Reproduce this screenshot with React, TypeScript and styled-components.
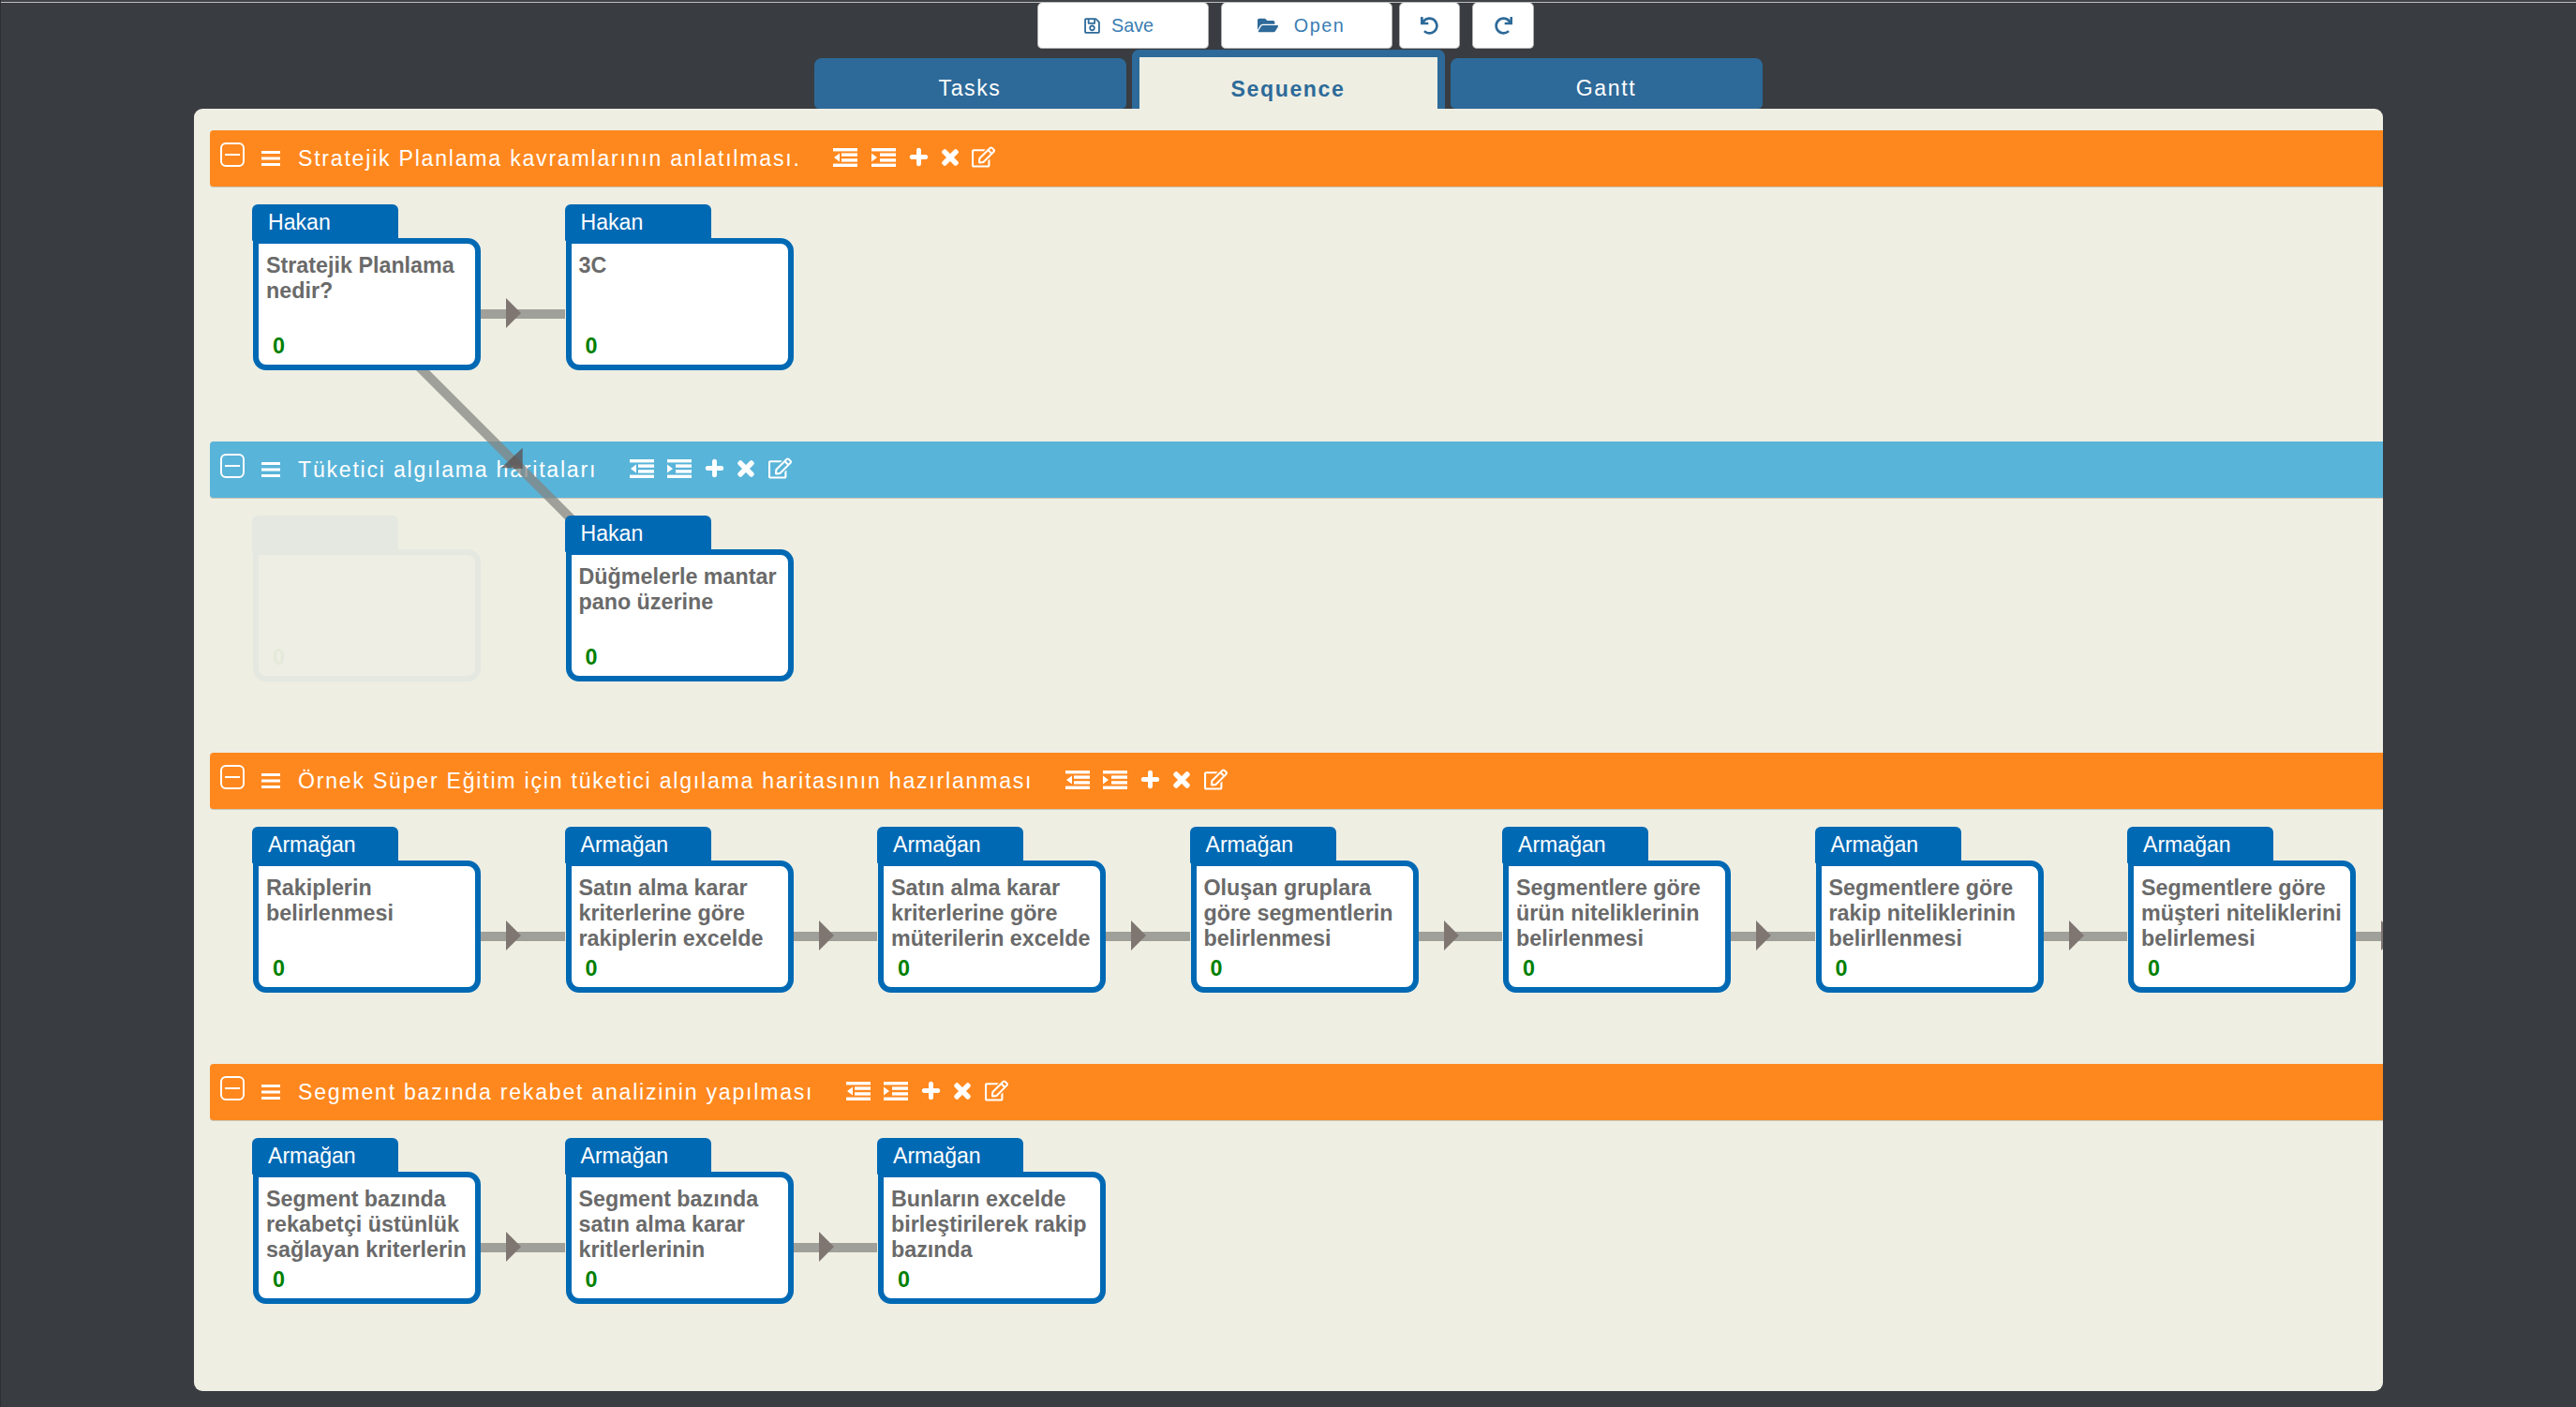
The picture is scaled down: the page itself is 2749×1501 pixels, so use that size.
import styled, { createGlobalStyle } from 'styled-components';
import { FaFolderOpen, FaPlus, FaRedo, FaRegEdit, FaRegSave, FaTimes, FaUndo } from 'react-icons/fa';

const GlobalStyle = createGlobalStyle`
  html, body {
    margin: 0;
    padding: 0;
    background: #393c41;
    font-family: "Liberation Sans", Arial, sans-serif;
  }
`;

type CardData = { owner?: string; title?: string; ghost?: boolean };
type RowData = { title: string; color: string; cards: CardData[]; tail?: boolean };

const rows: RowData[] = [
  {
    title: 'Stratejik Planlama kavramlarının anlatılması.',
    color: '#ff881e',
    cards: [
      { owner: 'Hakan', title: 'Stratejik Planlama nedir?' },
      { owner: 'Hakan', title: '3C' },
    ],
  },
  {
    title: 'Tüketici algılama haritaları',
    color: '#59b4d9',
    cards: [{ ghost: true }, { owner: 'Hakan', title: 'Düğmelerle mantar pano üzerine' }],
  },
  {
    title: 'Örnek Süper Eğitim için tüketici algılama haritasının hazırlanması',
    color: '#ff881e',
    tail: true,
    cards: [
      { owner: 'Armağan', title: 'Rakiplerin belirlenmesi' },
      { owner: 'Armağan', title: 'Satın alma karar kriterlerine göre rakiplerin excelde' },
      { owner: 'Armağan', title: 'Satın alma karar kriterlerine göre müterilerin excelde' },
      { owner: 'Armağan', title: 'Oluşan gruplara göre segmentlerin belirlenmesi' },
      { owner: 'Armağan', title: 'Segmentlere göre ürün niteliklerinin belirlenmesi' },
      { owner: 'Armağan', title: 'Segmentlere göre rakip niteliklerinin belirllenmesi' },
      { owner: 'Armağan', title: 'Segmentlere göre müşteri niteliklerini belirlemesi' },
    ],
  },
  {
    title: 'Segment bazında rekabet analizinin yapılması',
    color: '#ff881e',
    cards: [
      { owner: 'Armağan', title: 'Segment bazında rekabetçi üstünlük sağlayan kriterlerin' },
      { owner: 'Armağan', title: 'Segment bazında satın alma karar kritlerlerinin' },
      { owner: 'Armağan', title: 'Bunların excelde birleştirilerek rakip bazında' },
    ],
  },
];

const MinusSquare = () => (
  <svg width="26" height="26" viewBox="0 0 26 26">
    <rect x="1" y="1" width="24" height="24" rx="5" fill="none" stroke="#fff" strokeWidth="2" />
    <rect x="5" y="12" width="16" height="2" fill="#fff" />
  </svg>
);

const Bars = () => (
  <svg width="20" height="16" viewBox="0 0 20 16">
    <rect width="20" height="3" fill="#fff" />
    <rect y="6.5" width="20" height="3" fill="#fff" />
    <rect y="13" width="20" height="3" fill="#fff" />
  </svg>
);

const IndentIcon = ({ out }: { out?: boolean }) => (
  <svg width="26" height="20" viewBox="0 0 26 20">
    <rect width="26" height="3.4" fill="#fff" />
    <rect x="9" y="5.4" width="17" height="3.4" fill="#fff" />
    <rect x="9" y="11.2" width="17" height="3.4" fill="#fff" />
    <rect y="16.6" width="26" height="3.4" fill="#fff" />
    <polygon points={out ? '7,5.5 1,10 7,14.5' : '0,5.5 6,10 0,14.5'} fill="#fff" />
  </svg>
);

export default function App() {
  return (
    <>
      <GlobalStyle />
      <Page>
        <TopRule />
        <Toolbar>
          <ToolButton $width={183} $shift={10}>
            <FaRegSave size={19} />
            <span>Save</span>
          </ToolButton>
          <ToolButton $width={183} $offset={13} $shift={12} $gap={17} $spaced>
            <FaFolderOpen size={22} />
            <span>Open</span>
          </ToolButton>
          <ToolButton $width={65} $offset={7}>
            <FaUndo size={19} />
          </ToolButton>
          <ToolButton $width={66} $offset={13}>
            <FaRedo size={19} />
          </ToolButton>
        </Toolbar>
        <Tabs>
          <Tab>Tasks</Tab>
          <Tab $active>Sequence</Tab>
          <Tab>Gantt</Tab>
        </Tabs>
        <Panel>
          <LinkLayer viewBox="0 0 2336 1368">
            <line x1="174" y1="209" x2="506" y2="541" stroke="rgba(134,134,130,0.75)" strokeWidth="10" />
            <polygon points="350.7,361.7 328,383 350.7,384" fill="rgba(90,79,76,0.75)" />
          </LinkLayer>
          {rows.map((row) => (
            <Row key={row.title}>
              <RowHeader $color={row.color}>
                <Toggle>
                  <MinusSquare />
                </Toggle>
                <Handle>
                  <Bars />
                </Handle>
                <RowTitle>{row.title}</RowTitle>
                <Actions>
                  <ActionSlot $width={26}>
                    <IndentIcon out />
                  </ActionSlot>
                  <ActionSlot $width={25}>
                    <IndentIcon />
                  </ActionSlot>
                  <ActionSlot $width={20}>
                    <FaPlus size={21} stroke="#fff" strokeWidth={24} />
                  </ActionSlot>
                  <ActionSlot $width={17}>
                    <FaTimes size={24} stroke="#fff" strokeWidth={24} />
                  </ActionSlot>
                  <ActionSlot $width={25}>
                    <FaRegEdit size={25} />
                  </ActionSlot>
                </Actions>
              </RowHeader>
              <CardRow>
                {row.cards.map((card, i) => (
                  <CardCell key={i}>
                    <CardWrap $ghost={card.ghost}>
                      <OwnerTab>{card.owner}</OwnerTab>
                      <Card>
                        <CardTitle>{card.title}</CardTitle>
                        <Count>0</Count>
                      </Card>
                    </CardWrap>
                    {(i < row.cards.length - 1 || row.tail) && (
                      <Connector $hidden={card.ghost}>
                        <ArrowHead />
                      </Connector>
                    )}
                  </CardCell>
                ))}
              </CardRow>
            </Row>
          ))}
        </Panel>
      </Page>
    </>
  );
}

const Page = styled.div`
  width: 2749px;
  height: 1501px;
  box-sizing: border-box;
  overflow: hidden;
  border-left: 1px solid #2c2f33;
  background: #393c41;
`;

const TopRule = styled.div`
  height: 2px;
  background: #3f4246;
  border-bottom: 1px solid #bdbdbd;
`;

const Toolbar = styled.div`
  display: flex;
  height: 49px;
  padding-left: 1106px;
`;

const ToolButton = styled.button<{ $width: number; $offset?: number; $shift?: number; $gap?: number; $spaced?: boolean }>`
  width: ${({ $width }) => $width}px;
  height: 49px;
  box-sizing: border-box;
  display: flex;
  align-items: center;
  justify-content: center;
  gap: ${({ $gap }) => $gap ?? 11}px;
  margin-left: ${({ $offset }) => $offset ?? 0}px;
  padding: 0 ${({ $shift }) => $shift ?? 0}px 0 0;
  background: #fff;
  border: 1px solid #b0b0b0;
  border-top: none;
  border-radius: 5px;
  color: #3a7db3;
  font-family: inherit;
  font-size: 19.8px;
  letter-spacing: ${({ $spaced }) => ($spaced ? '1.5px' : '0')};

  svg {
    color: #2d6a99;
  }
`;

const Tabs = styled.div`
  display: flex;
  align-items: flex-end;
  justify-content: center;
  gap: 6px;
  height: 64px;
  margin-left: -1px;
`;

const Tab = styled.div<{ $active?: boolean }>`
  width: ${({ $active }) => ($active ? 334 : 333)}px;
  height: ${({ $active }) => ($active ? 63 : 54)}px;
  box-sizing: border-box;
  display: flex;
  align-items: center;
  justify-content: center;
  padding-top: ${({ $active }) => ($active ? 13 : 10)}px;
  border-radius: 8px 8px ${({ $active }) => ($active ? '0 0' : '5px 5px')};
  background: ${({ $active }) => ($active ? '#eeeee3' : '#2d6a99')};
  border: ${({ $active }) => ($active ? '8px solid #2d6a99' : 'none')};
  border-bottom: none;
  color: ${({ $active }) => ($active ? '#2d6a99' : '#fff')};
  font-size: 23.1px;
  font-weight: ${({ $active }) => ($active ? 700 : 400)};
  letter-spacing: 1.6px;
`;

const Panel = styled.div`
  position: relative;
  width: 2336px;
  height: 1368px;
  box-sizing: border-box;
  margin-left: 206px;
  padding: 23px 0 0 17px;
  overflow: hidden;
  border-radius: 9px;
  background: #eeeee3;
`;

const LinkLayer = styled.svg`
  position: absolute;
  left: 0;
  top: 0;
  width: 2336px;
  height: 1368px;
  z-index: 1;
  pointer-events: none;
`;

const Row = styled.section`
  height: 332px;
`;

const RowHeader = styled.header<{ $color: string }>`
  display: flex;
  align-items: center;
  height: 61px;
  box-sizing: border-box;
  padding-left: 11px;
  border-bottom: 1px solid #c9c6b6;
  border-radius: 4px 0 0 4px;
  background: ${({ $color }) => $color};
  color: #fff;
`;

const Toggle = styled.span`
  display: flex;
  margin-bottom: 9px;
`;

const Handle = styled.span`
  display: flex;
  margin-left: 18px;
`;

const RowTitle = styled.span`
  margin-left: 19px;
  font-size: 23.1px;
  letter-spacing: 1.77px;
  white-space: nowrap;
`;

const Actions = styled.span`
  display: flex;
  align-items: center;
  gap: 15px;
  height: 20px;
  margin-left: 34.5px;
  margin-bottom: 3px;
`;

const ActionSlot = styled.span<{ $width: number }>`
  display: flex;
  align-items: center;
  justify-content: center;
  width: ${({ $width }) => $width}px;

  svg {
    flex-shrink: 0;
  }
`;

const CardRow = styled.div`
  display: flex;
  padding: 18px 0 0 45px;
`;

const CardCell = styled.div`
  display: flex;
  flex-shrink: 0;
`;

const CardWrap = styled.div<{ $ghost?: boolean }>`
  position: relative;
  z-index: 2;
  width: 244px;
  opacity: ${({ $ghost }) => ($ghost ? 0.035 : 1)};
`;

const OwnerTab = styled.div`
  position: relative;
  z-index: 1;
  width: 156px;
  height: 39px;
  box-sizing: border-box;
  padding-left: 17px;
  border-radius: 6px 6px 0 1px;
  background: #0069b4;
  color: #fff;
  font-size: 23.1px;
  line-height: 39px;
`;

const Card = styled.div`
  display: flex;
  flex-direction: column;
  justify-content: space-between;
  width: 243px;
  height: 141px;
  box-sizing: border-box;
  margin: -3px 0 0 1px;
  padding: 10px 0 6px 8px;
  border: 6px solid #0069b4;
  border-radius: 0 14px 14px 14px;
  background: #fff;
`;

const CardTitle = styled.div`
  color: #6a6a6a;
  font-size: 23.3px;
  font-weight: 700;
  line-height: 27px;
`;

const Count = styled.div`
  padding-left: 7px;
  color: #008000;
  font-size: 23.3px;
  font-weight: 700;
  line-height: 27px;
`;

const Connector = styled.div<{ $hidden?: boolean }>`
  position: relative;
  width: 89.5px;
  height: 10px;
  margin-top: 112px;
  background: #a0a09a;
  visibility: ${({ $hidden }) => ($hidden ? 'hidden' : 'visible')};
`;

const ArrowHead = styled.div`
  position: absolute;
  left: 27px;
  top: -12px;
  width: 0;
  height: 0;
  border-style: solid;
  border-width: 16px 0 16px 16px;
  border-color: transparent transparent transparent #7f7672;
`;
